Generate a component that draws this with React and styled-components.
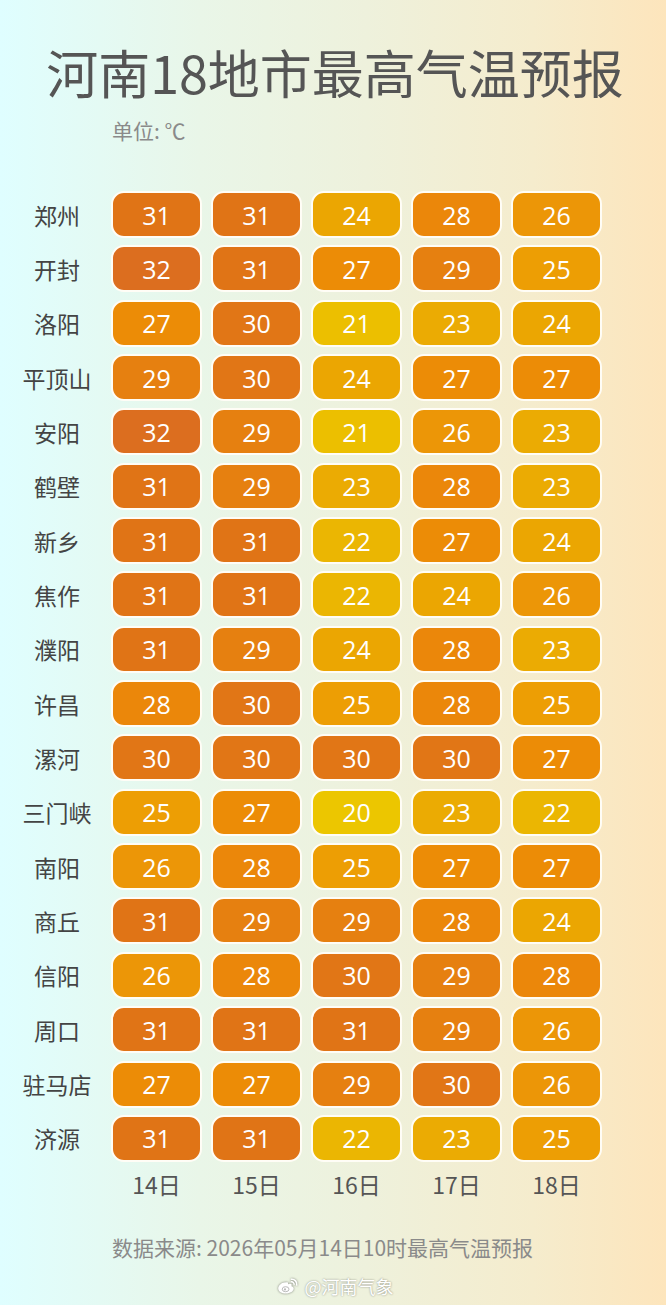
import React from 'react';
import styled, { createGlobalStyle } from 'styled-components';

const GlobalStyle = createGlobalStyle`
  html, body {
    margin: 0;
    padding: 0;
  }
  body {
    font-family: "Noto Sans CJK SC", "Noto Sans", sans-serif;
  }
`;

const Page = styled.div`
  width: 666px;
  height: 1305px;
  box-sizing: border-box;
  background: linear-gradient(90deg, #dffeff 0%, #e9f6e8 30%, #eef1dc 55%, #f5eccd 80%, #fde5bc 100%);
  display: flex;
  flex-direction: column;
  overflow: hidden;
`;

const Title = styled.h1`
  margin: 36px 0 0 0;
  font-size: 52px;
  line-height: 72px;
  font-weight: 400;
  color: #555555;
  text-align: center;
  padding-left: 4px;
`;

const Unit = styled.div`
  margin: 9px 0 0 112px;
  font-size: 21px;
  line-height: 26px;
  color: #8a8a8a;
`;

const Table = styled.div`
  margin-top: 48px;
  display: flex;
  flex-direction: column;
  gap: 7.35px;
`;

const Row = styled.div`
  display: flex;
  align-items: center;
  height: 47px;
`;

const City = styled.div`
  width: 108px;
  padding-left: 3px;
  text-align: center;
  font-size: 23px;
  color: #444444;
`;

const Cells = styled.div`
  display: grid;
  grid-template-columns: repeat(5, 91px);
  column-gap: 9px;
`;

const Cell = styled.div`
  box-sizing: border-box;
  height: 47px;
  border: 2.5px solid #fffdf6;
  border-radius: 13px;
  background: ${({ $bg }) => $bg};
  color: #ffffff;
  font-family: "Open Sans", "Noto Sans", sans-serif;
  font-size: 25px;
  display: flex;
  align-items: center;
  justify-content: center;
`;

const Dates = styled.div`
  margin: 5px 0 0 111px;
  display: grid;
  grid-template-columns: repeat(5, 91px);
  column-gap: 9px;
`;

const DateLabel = styled.div`
  text-align: center;
  font-size: 23px;
  line-height: 34px;
  color: #555555;
`;

const Source = styled.div`
  margin: 32px 0 0 112px;
  font-size: 21px;
  line-height: 28px;
  color: #8a8a8a;
`;

const Watermark = styled.div`
  margin-top: 12px;
  display: flex;
  align-items: center;
  justify-content: center;
  gap: 4px;
  padding-left: 4px;
  font-size: 18px;
  color: #ffffff;
  text-shadow: 0 0 2px rgba(0, 0, 0, 0.45);
`;

const colors = {
  32: '#dc6e1f',
  31: '#e07416',
  30: '#e17616',
  29: '#e68010',
  28: '#eb870a',
  27: '#ec8c06',
  26: '#ec9607',
  25: '#ed9e04',
  24: '#eba602',
  23: '#ebab03',
  22: '#ebb602',
  21: '#ecbf00',
  20: '#ecc600',
};

const data = [
  ['郑州', [31, 31, 24, 28, 26]],
  ['开封', [32, 31, 27, 29, 25]],
  ['洛阳', [27, 30, 21, 23, 24]],
  ['平顶山', [29, 30, 24, 27, 27]],
  ['安阳', [32, 29, 21, 26, 23]],
  ['鹤壁', [31, 29, 23, 28, 23]],
  ['新乡', [31, 31, 22, 27, 24]],
  ['焦作', [31, 31, 22, 24, 26]],
  ['濮阳', [31, 29, 24, 28, 23]],
  ['许昌', [28, 30, 25, 28, 25]],
  ['漯河', [30, 30, 30, 30, 27]],
  ['三门峡', [25, 27, 20, 23, 22]],
  ['南阳', [26, 28, 25, 27, 27]],
  ['商丘', [31, 29, 29, 28, 24]],
  ['信阳', [26, 28, 30, 29, 28]],
  ['周口', [31, 31, 31, 29, 26]],
  ['驻马店', [27, 27, 29, 30, 26]],
  ['济源', [31, 31, 22, 23, 25]],
];

const days = ['14日', '15日', '16日', '17日', '18日'];

// 微博 logo
const WeiboIcon = () => (
  <svg width="24" height="20" viewBox="0 0 24 20" style={{ filter: 'drop-shadow(0 0 1px rgba(0,0,0,0.5))' }}>
    <path
      d="M9.5 6.2c-3.4 0-7.3 3-7.3 6.2 0 3 3.6 5.2 7.6 5.2 4.6 0 7.9-2.6 7.9-5 0-1.4-1.2-2.1-2.2-2.4.3-.9.4-2.4-1.3-2.4-1 0-2.1.5-2.1.5s.5-1.7-.6-2c-.6-.1-1.3 0-2 .1z"
      fill="#ffffff"
    />
    <ellipse cx="9.6" cy="13.2" rx="3.4" ry="2.5" fill="none" stroke="#bbbbbb" strokeWidth="1" />
    <circle cx="9" cy="13.4" r="1.1" fill="#bbbbbb" />
    <path d="M15.5 3.2a5 5 0 0 1 5.2 5.8" fill="none" stroke="#ffffff" strokeWidth="1.6" strokeLinecap="round" />
    <path d="M15.3 5.8a2.4 2.4 0 0 1 2.8 2.6" fill="none" stroke="#ffffff" strokeWidth="1.4" strokeLinecap="round" />
  </svg>
);

const App = () => {
  return (
    <Page>
      <GlobalStyle />
      <Title>河南18地市最高气温预报</Title>
      <Unit>单位: ℃</Unit>
      <Table>
        {data.map(([city, temps]) => (
          <Row key={city}>
            <City>{city}</City>
            <Cells>
              {temps.map((t, i) => (
                <Cell key={i} $bg={colors[t]}>
                  {t}
                </Cell>
              ))}
            </Cells>
          </Row>
        ))}
      </Table>
      <Dates>
        {days.map((d) => (
          <DateLabel key={d}>{d}</DateLabel>
        ))}
      </Dates>
      <Source>数据来源: 2026年05月14日10时最高气温预报</Source>
      <Watermark>
        <WeiboIcon />
        <span>@河南气象</span>
      </Watermark>
    </Page>
  );
};

export default App;
